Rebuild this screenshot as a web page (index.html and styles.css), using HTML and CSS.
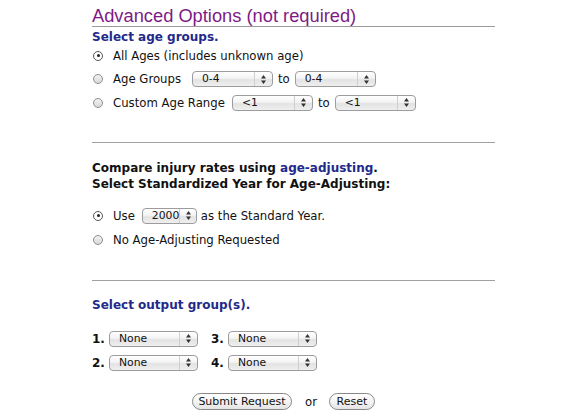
FILE: index.html
```html
<!DOCTYPE html>
<html>
<head>
<meta charset="utf-8">
<link rel="stylesheet" href="styles.css">
</head>
<body>
<div class="page">
  <h1 class="title">Advanced Options (not required)</h1>
  <div class="label">Select age groups.</div>
  <div class="radios age">
    <div class="row"><span class="radio on"></span><span>All Ages (includes unknown age)</span></div>
    <div class="row"><span class="radio"></span><span class="lbl w-groups">Age Groups</span>
      <span class="sel w80"><span class="val">0-4</span><span class="arr"><svg width="5" height="9" viewBox="0 0 5 9"><path d="M2.5 0L5 3.5H0z M2.5 9L0 5.5H5z" fill="#333"/></svg></span></span>
      <span class="to">to</span>
      <span class="sel w80"><span class="val">0-4</span><span class="arr"><svg width="5" height="9" viewBox="0 0 5 9"><path d="M2.5 0L5 3.5H0z M2.5 9L0 5.5H5z" fill="#333"/></svg></span></span>
    </div>
    <div class="row"><span class="radio"></span><span class="lbl w-custom">Custom Age Range</span>
      <span class="sel w80"><span class="val">&lt;1</span><span class="arr"><svg width="5" height="9" viewBox="0 0 5 9"><path d="M2.5 0L5 3.5H0z M2.5 9L0 5.5H5z" fill="#333"/></svg></span></span>
      <span class="to">to</span>
      <span class="sel w80"><span class="val">&lt;1</span><span class="arr"><svg width="5" height="9" viewBox="0 0 5 9"><path d="M2.5 0L5 3.5H0z M2.5 9L0 5.5H5z" fill="#333"/></svg></span></span>
    </div>
  </div>
  <hr class="rule first">
  <div class="heading">Compare injury rates using <a class="link">age-adjusting</a>.<br>Select Standardized Year for Age-Adjusting:</div>
  <div class="radios std">
    <div class="row"><span class="radio on"></span><span class="lbl">Use</span>
      <span class="sel w54"><span class="val">2000</span><span class="arr"><svg width="5" height="9" viewBox="0 0 5 9"><path d="M2.5 0L5 3.5H0z M2.5 9L0 5.5H5z" fill="#333"/></svg></span></span>
      <span class="to">as the Standard Year.</span>
    </div>
    <div class="row"><span class="radio"></span><span>No Age-Adjusting Requested</span></div>
  </div>
  <hr class="rule second">
  <div class="label out">Select output group(s).</div>
  <div class="groups">
    <div class="grp"><b>1.</b><span class="sel w88"><span class="val">None</span><span class="arr"><svg width="5" height="9" viewBox="0 0 5 9"><path d="M2.5 0L5 3.5H0z M2.5 9L0 5.5H5z" fill="#333"/></svg></span></span></div>
    <div class="grp"><b>3.</b><span class="sel w88"><span class="val">None</span><span class="arr"><svg width="5" height="9" viewBox="0 0 5 9"><path d="M2.5 0L5 3.5H0z M2.5 9L0 5.5H5z" fill="#333"/></svg></span></span></div>
    <div class="grp"><b>2.</b><span class="sel w88"><span class="val">None</span><span class="arr"><svg width="5" height="9" viewBox="0 0 5 9"><path d="M2.5 0L5 3.5H0z M2.5 9L0 5.5H5z" fill="#333"/></svg></span></span></div>
    <div class="grp"><b>4.</b><span class="sel w88"><span class="val">None</span><span class="arr"><svg width="5" height="9" viewBox="0 0 5 9"><path d="M2.5 0L5 3.5H0z M2.5 9L0 5.5H5z" fill="#333"/></svg></span></span></div>
  </div>
  <div class="actions">
    <span class="btn submit">Submit Request</span>
    <span class="or">or</span>
    <span class="btn reset">Reset</span>
  </div>
</div>
</body>
</html>
```

FILE: styles.css
```css
html, body {
  margin: 0;
  padding: 0;
  background: #fff;
}
body {
  font-family: "DejaVu Sans", Verdana, sans-serif;
  font-size: 11.7px;
  color: #111;
}
.page {
  width: 403px;
  padding: 6px 0 0 92px;
}
.title {
  margin: 0;
  font-family: "Liberation Sans", "DejaVu Sans", sans-serif;
  font-weight: normal;
  font-size: 18.3px;
  line-height: 19px;
  color: #7d1b86;
  padding-bottom: 1px;
  border-bottom: 1px solid #9a9a9a;
}
.label {
  font-weight: bold;
  color: #1f2a8a;
  font-size: 12px;
  margin-top: 3px;
  line-height: 14px;
}
.radios .row {
  display: flex;
  align-items: center;
  height: 23.5px;
}
.radios.age {
  margin-top: 0;
}
.radio {
  width: 8px;
  height: 8px;
  border: 1px solid #8f8f8f;
  border-radius: 50%;
  margin: 0 10px 0 1px;
  background: linear-gradient(#f2f2f2, #d9d9d9);
  position: relative;
  flex: none;
}
.radio.on {
  background: #fff;
  border-color: #555;
}
.radio.on::after {
  content: "";
  position: absolute;
  left: 2.5px;
  top: 2.5px;
  width: 3px;
  height: 3px;
  border-radius: 50%;
  background: #222;
}
.w-groups { width: 79px; }
.w-custom { width: 119px; }
.sel {
  display: inline-flex;
  align-items: center;
  height: 16px;
  box-sizing: border-box;
  border: 1px solid #9c9c9c;
  border-radius: 4px;
  background: linear-gradient(#ffffff 0%, #f3f3f3 45%, #e3e3e3 55%, #efefef 100%);
  font-size: 10.8px;
  color: #111;
  position: relative;
  flex: none;
}
.sel .val {
  flex: 1;
  padding-left: 9px;
  line-height: 14px;
}
.sel .arr {
  width: 17px;
  height: 100%;
  border-left: 1px solid #cfcfcf;
  display: flex;
  align-items: center;
  justify-content: center;
}
.w80 { width: 81px; }
.w54 { width: 55px; }
.w88 { width: 89px; }
.to {
  margin: 0 5px;
}
.rule {
  border: 0;
  border-top: 1px solid #a0a0a0;
  margin: 0;
  height: 0;
}
.rule.first {
  margin-top: 27px;
}
.heading {
  font-weight: bold;
  font-size: 12px;
  line-height: 16px;
  margin-top: 17px;
  color: #111;
}
.link {
  color: #1f2a8a;
}
.radios.std {
  margin-top: 12px;
}
.radios.std .row {
  height: 24.5px;
}
.std .lbl { margin-right: 7px; }
.std .to { margin-left: 4px; }
.rule.second {
  margin-top: 27px;
}
.label.out {
  margin-top: 17px;
}
.groups {
  display: grid;
  grid-template-columns: 119px 120px;
  row-gap: 8px;
  margin-top: 19px;
}
.grp {
  display: flex;
  align-items: center;
  height: 16px;
}
.grp b {
  font-size: 12px;
  width: 17px;
}
.actions {
  display: flex;
  align-items: center;
  margin: 22px 0 0 100px;
  height: 18px;
}
.btn {
  box-sizing: border-box;
  height: 17px;
  border: 1px solid #888;
  border-radius: 9px;
  background: linear-gradient(#ffffff 0%, #f4f4f4 50%, #e4e4e4 100%);
  padding: 0 8px;
  font-size: 11px;
  line-height: 15px;
  color: #111;
}
.submit { width: 100px; text-align: center; padding: 0; }
.reset { width: 46px; text-align: center; padding: 0; }
.or {
  margin: 0 12px 0 13px;
  font-size: 11.7px;
}
```
